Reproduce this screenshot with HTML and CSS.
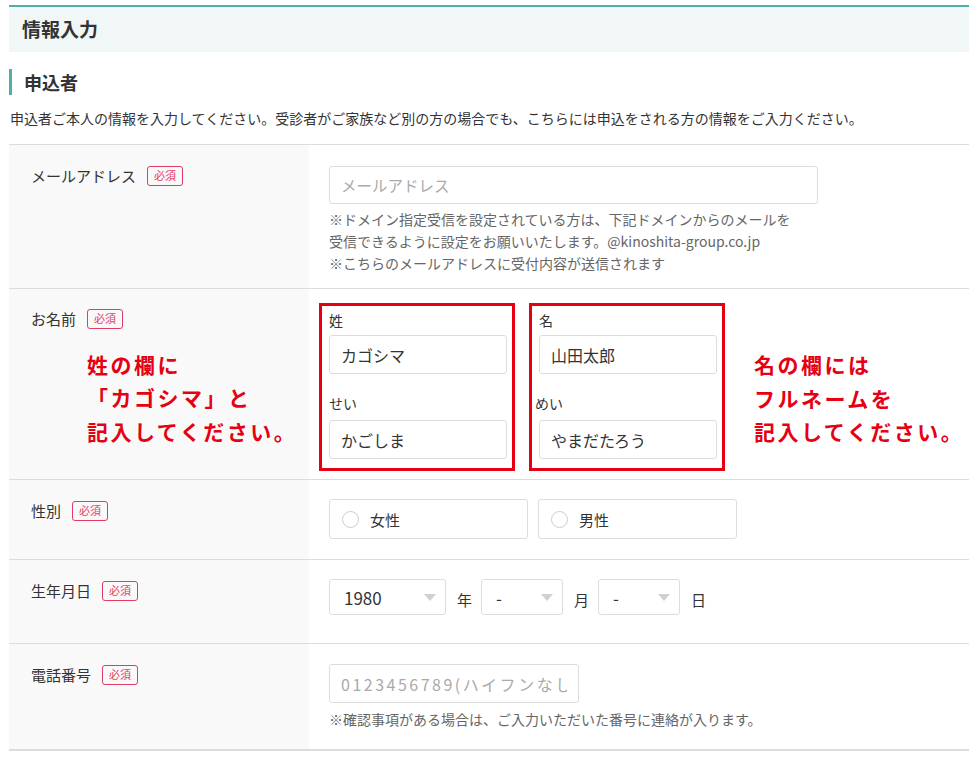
FILE: index.html
```html
<!DOCTYPE html>
<html lang="ja">
<head>
<meta charset="utf-8">
<title>情報入力</title>
<link rel="stylesheet" href="styles.css">
</head>
<body>
<div class="page">
  <div class="page-title"><h1>情報入力</h1></div>
  <h2 class="sec-title">申込者</h2>
  <p class="lead">申込者ご本人の情報を入力してください。受診者がご家族など別の方の場合でも、こちらには申込をされる方の情報をご入力ください。</p>

  <div class="form">
    <div class="row row-email">
      <div class="th"><span class="label">メールアドレス</span><span class="req">必須</span></div>
      <div class="td">
        <input class="text email" type="text" placeholder="メールアドレス">
        <p class="note">※ドメイン指定受信を設定されている方は、下記ドメインからのメールを<br>受信できるように設定をお願いいたします。@kinoshita-group.co.jp<br>※こちらのメールアドレスに受付内容が送信されます</p>
      </div>
    </div>

    <div class="row row-name">
      <div class="th">
        <span class="label">お名前</span><span class="req">必須</span>
        <p class="annot annot-left">姓の欄に<br>「カゴシマ」と<br>記入してください。</p>
      </div>
      <div class="td name-cell">
        <div class="name-box">
          <label class="sub">姓</label>
          <input class="text name" type="text" value="カゴシマ">
          <label class="sub sub-2">せい</label>
          <input class="text name" type="text" value="かごしま">
        </div>
        <div class="name-box">
          <label class="sub">名</label>
          <input class="text name" type="text" value="山田太郎">
          <label class="sub sub-2 sub-mei">めい</label>
          <input class="text name" type="text" value="やまだたろう">
        </div>
        <p class="annot annot-right">名の欄には<br>フルネームを<br>記入してください。</p>
      </div>
    </div>

    <div class="row row-gender">
      <div class="th"><span class="label">性別</span><span class="req">必須</span></div>
      <div class="td radios">
        <label class="radio"><span class="circle"></span>女性</label>
        <label class="radio"><span class="circle"></span>男性</label>
      </div>
    </div>

    <div class="row row-dob">
      <div class="th"><span class="label">生年月日</span><span class="req">必須</span></div>
      <div class="td dob">
        <div class="select sel-year"><select><option>1980</option></select></div>
        <span class="unit">年</span>
        <div class="select sel-md"><select><option>-</option></select></div>
        <span class="unit">月</span>
        <div class="select sel-md"><select><option>-</option></select></div>
        <span class="unit">日</span>
      </div>
    </div>

    <div class="row row-tel">
      <div class="th"><span class="label">電話番号</span><span class="req">必須</span></div>
      <div class="td">
        <input class="text tel" type="text" placeholder="0123456789(ハイフンなし)">
        <p class="note tel-note">※確認事項がある場合は、ご入力いただいた番号に連絡が入ります。</p>
      </div>
    </div>
  </div>
</div>
</body>
</html>
```

FILE: styles.css
```css
* { box-sizing: border-box; }

body {
  margin: 0;
  background: #fff;
  color: #333;
  font-family: "Noto Sans CJK JP", "Noto Sans", sans-serif;
}

.page {
  width: 960px;
  margin: 5px 0 0 9px;
}

.page-title {
  height: 47px;
  border-top: 2px solid #52aea6;
  background: #f0f7f6;
  display: flex;
  align-items: center;
  padding: 0 0 2px 13px;
}

.page-title h1 {
  margin: 0;
  font-size: 19px;
  font-weight: 700;
  line-height: 1;
  color: #333;
}

.sec-title {
  margin: 17px 0 0;
  height: 26px;
  border-left: 3px solid #52aea6;
  padding-left: 12px;
  font-size: 18px;
  font-weight: 700;
  line-height: 26px;
}

.lead {
  margin: 12px 0 15px 1px;
  font-size: 14px;
  line-height: 22px;
}

.form {
  border-top: 1px solid #ddd;
}

.row {
  display: grid;
  grid-template-columns: 300px 1fr;
  border-bottom: 1px solid #ddd;
}

.row-tel {
  border-bottom-width: 2px;
}

.th {
  background: #f9f9f9;
  padding: 16px 0 0 22px;
}

.label {
  font-size: 15px;
  line-height: 22px;
  vertical-align: middle;
}

.req {
  display: inline-flex;
  align-items: center;
  justify-content: center;
  vertical-align: middle;
  margin-left: 11px;
  width: 36px;
  height: 20px;
  border: 1px solid #df3d66;
  border-radius: 3px;
  color: #df3d66;
  font-size: 11px;
  line-height: 1;
}

.td {
  padding: 20px 0 20px 20px;
}

.text {
  display: block;
  height: 39px;
  border: 1px solid #ddd;
  border-radius: 3px;
  padding: 0 11px;
  font-family: "Noto Sans CJK JP", "Noto Sans", sans-serif;
  font-size: 16px;
  color: #333;
  background: #fff;
  outline: none;
}

.text::placeholder {
  color: #aaa;
}

.email {
  width: 489px;
  height: 38px;
  margin-top: 1px;
  font-size: 15.5px;
}

.note {
  margin: 4px 0 0;
  font-size: 14px;
  line-height: 22px;
  color: #666;
}

.row-email .td {
  padding-bottom: 14px;
}

/* name row */
.row-name .th {
  padding-top: 15px;
}

.name-cell {
  display: flex;
  align-items: flex-start;
  gap: 14px;
  padding: 14px 0 8px 10px;
}

.name-box {
  width: 196px;
  border: 3px solid #e60012;
  padding: 2px 5px 9px 7px;
}

.sub {
  display: block;
  font-size: 14px;
  line-height: 24px;
  margin-bottom: 3px;
}

.sub-2 {
  margin-top: 17px;
  margin-bottom: 5px;
}

.sub-mei {
  margin-left: -4px;
}

.name {
  width: 178px;
}

.annot {
  margin: 0;
  color: #e60012;
  font-size: 21px;
  font-weight: 700;
  line-height: 33.5px;
  letter-spacing: 2.5px;
}

.annot-left {
  margin: 18px 0 0 56px;
}

.annot-right {
  margin: 45px 0 0 15px;
}

/* gender */
.radios {
  display: flex;
  gap: 10px;
  padding-top: 19px;
  padding-bottom: 20px;
}

.radio {
  width: 199px;
  height: 40px;
  border: 1px solid #ddd;
  border-radius: 3px;
  display: flex;
  align-items: center;
  padding-left: 12px;
  font-size: 15px;
}

.circle {
  width: 17px;
  height: 17px;
  border: 1px solid #ccc;
  border-radius: 50%;
  margin-right: 11px;
}

/* date of birth */
.dob {
  display: flex;
  align-items: center;
  padding-top: 19px;
  padding-bottom: 28px;
}

.select {
  position: relative;
  height: 36px;
}

.select select {
  appearance: none;
  -webkit-appearance: none;
  width: 100%;
  height: 100%;
  border: 1px solid #ddd;
  border-radius: 3px;
  background: #fff;
  padding: 0 0 0 14px;
  font-family: "Noto Sans CJK JP", "Noto Sans", sans-serif;
  font-size: 17px;
  color: #333;
  outline: none;
}

.select::after {
  content: "";
  position: absolute;
  right: 10px;
  top: 15px;
  border-left: 6px solid transparent;
  border-right: 6px solid transparent;
  border-top: 7px solid #d0d0d0;
}

.sel-year { width: 117px; }
.sel-md { width: 82px; }

.unit {
  font-size: 15px;
  margin: 5px 9px 0 11px;
}

/* tel */
.tel {
  width: 250px;
  letter-spacing: 2.5px;
}

.tel-note {
  margin-top: 5px;
}

.row-tel .td {
  padding-bottom: 19px;
}
```
